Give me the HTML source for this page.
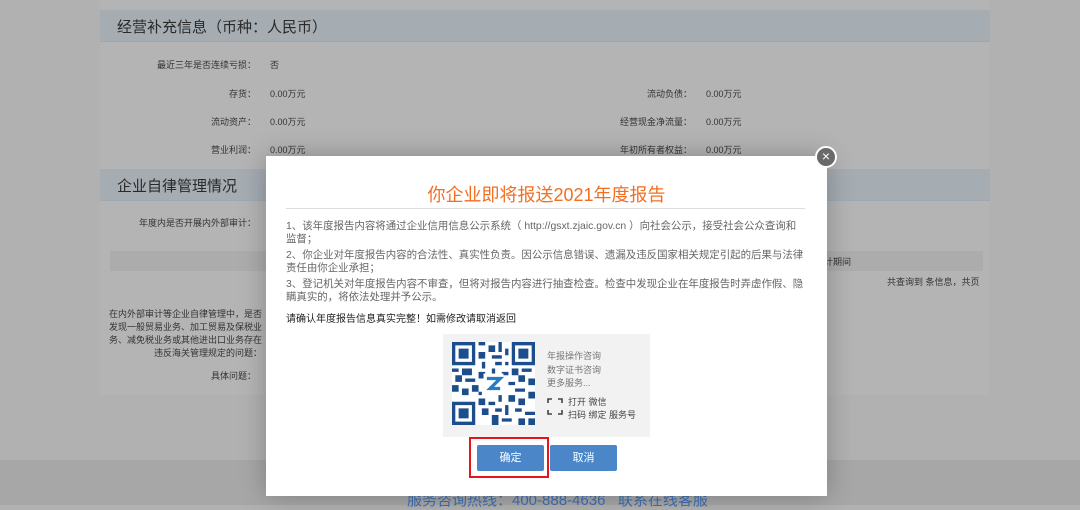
<!DOCTYPE html>
<html><head><meta charset="utf-8"><style>
*{margin:0;padding:0;box-sizing:border-box}
body{width:1080px;height:505px;overflow:hidden;background:#b1b1b1;font-family:"Liberation Sans","Noto Sans CJK SC",sans-serif;position:relative}
.a{position:absolute;white-space:nowrap}
.panel{position:absolute;left:100px;top:0;width:890px;height:395px;background:#b4b4b4}
.hd{position:absolute;left:100px;width:890px;height:32px;background:#a5acb2;border-bottom:1px solid #9fa8b0;color:#2a2a2a;font-size:15px;padding:6px 0 0 17px}
.lb{font-size:9px;color:#333;text-align:right}
.v{font-size:9px;color:#333}
.foot{position:absolute;left:0;top:460px;width:1080px;height:45px;background:#a7a7a7}
.modal{position:absolute;left:266px;top:156px;width:561px;height:340px;background:#fff;box-shadow:0 0 25px rgba(0,0,0,.25)}
.t{font-size:10.45px;color:#666;line-height:13px;margin-bottom:3px;white-space:nowrap}
.btn{position:absolute;top:445px;width:67px;height:26px;background:#4a86c8;color:#fff;font-size:11px;text-align:center;line-height:26px;border-radius:2px}
</style></head><body>
<div class="panel"></div>
<div class="hd" style="top:10px">经营补充信息（币种：人民币）</div>
<div class="a lb" style="left:140px;width:116px;top:58px">最近三年是否连续亏损：</div><div class="a v" style="left:270px;top:58px">否</div>
<div class="a lb" style="left:140px;width:116px;top:87px">存货：</div><div class="a v" style="left:270px;top:87px">0.00万元</div>
<div class="a lb" style="left:140px;width:116px;top:115px">流动资产：</div><div class="a v" style="left:270px;top:115px">0.00万元</div>
<div class="a lb" style="left:140px;width:116px;top:143px">营业利润：</div><div class="a v" style="left:270px;top:143px">0.00万元</div>
<div class="a lb" style="left:580px;width:112px;top:87px">流动负债：</div><div class="a v" style="left:706px;top:87px">0.00万元</div>
<div class="a lb" style="left:580px;width:112px;top:115px">经营现金净流量：</div><div class="a v" style="left:706px;top:115px">0.00万元</div>
<div class="a lb" style="left:580px;width:112px;top:143px">年初所有者权益：</div><div class="a v" style="left:706px;top:143px">0.00万元</div>
<div class="hd" style="top:169px">企业自律管理情况</div>
<div class="a lb" style="left:120px;width:136px;top:216px">年度内是否开展内外部审计：</div>
<div class="a" style="left:110px;top:251px;width:873px;height:20px;background:#acacac"></div>
<div class="a v" style="left:824px;top:255px">计期间</div>
<div class="a v" style="left:887px;top:275px">共查询到 条信息，共页</div>
<div class="a lb" style="left:100px;width:162px;top:308px;line-height:13px">在内外部审计等企业自律管理中，是否<br>发现一般贸易业务、加工贸易及保税业<br>务、减免税业务或其他进出口业务存在<br>违反海关管理规定的问题：</div>
<div class="a lb" style="left:150px;width:106px;top:369px">具体问题：</div>
<div class="foot"></div>
<div class="a" style="left:407px;top:489px;font-size:15px;color:#3d6fb4">服务咨询热线：400-888-4636&nbsp;&nbsp;&nbsp;联系在线客服</div>
<div class="modal">
<div class="a" style="left:0;width:561px;text-align:center;top:25px;font-size:18px;color:#f26f22">你企业即将报送2021年度报告</div>
<div class="a" style="left:20px;top:52px;width:519px;height:1px;background:#ddd"></div>
<div class="a" style="left:20px;top:64px;width:530px">
<div class="t">1、该年度报告内容将通过企业信用信息公示系统（ http://gsxt.zjaic.gov.cn ）向社会公示，接受社会公众查询和<br>监督；</div>
<div class="t">2、你企业对年度报告内容的合法性、真实性负责。因公示信息错误、遗漏及违反国家相关规定引起的后果与法律<br>责任由你企业承担；</div>
<div class="t">3、登记机关对年度报告内容不审查，但将对报告内容进行抽查检查。检查中发现企业在年度报告时弄虚作假、隐<br>瞒真实的，将依法处理并予公示。</div>
</div>
<div class="a" style="left:20px;top:154px;font-size:10px;color:#222">请确认年度报告信息真实完整！如需修改请取消返回</div>
<div class="a" style="left:177px;top:178px;width:207px;height:103px;background:#f2f2f2"></div>
<svg class="a" style="left:186px;top:186px" width="83" height="83" viewBox="0 0 25 25">
<rect width="25" height="25" fill="#fff"/>
<g fill="#1c4d8c"><path d="M0 0h7v7H0zM18 0h7v7h-7zM0 18h7v7H0z"/></g>
<g fill="#fff"><path d="M1 1h5v5H1zM19 1h5v5h-5zM1 19h5v5H1z"/></g>
<g fill="#1c4d8c"><path d="M2 2h3v3H2zM20 2h3v3h-3zM2 20h3v3H2z"/>
<path d="M8 0h2v1H8zM11 1h2v2h-2zM14 0h1v3h-1zM16 2h1v2h-1zM8 3h2v2H8zM12 4h3v1h-3zM9 6h1v2H9zM13 6h2v1h-2zM16 6h1v1h-1zM0 8h2v1H0zM3 8h3v2H3zM1 10h2v2H1zM4 11h3v1H4zM0 13h2v2H0zM3 14h2v2H3zM6 13h2v2H6zM8 9h2v2H8zM12 8h1v2h-1zM15 9h2v1h-2zM18 8h2v2h-2zM21 8h3v1h-3zM20 10h2v2h-2zM23 11h2v2h-2zM17 12h2v1h-2zM19 14h3v1h-3zM23 15h2v2h-2zM17 16h2v2h-2zM20 17h2v2h-2zM8 17h2v2H8zM11 18h2v1h-2zM9 20h2v2H9zM13 20h2v1h-2zM12 22h2v3h-2zM15 23h3v1h-3zM16 19h1v3h-1zM19 20h2v1h-2zM22 21h3v1h-3zM20 23h2v2h-2zM23 23h2v2h-2zM8 15h1v1H8zM14 16h1v2h-1z"/></g>
<rect x="9.5" y="9.5" width="6" height="6" fill="#fff"/>
<path d="M10.5 11h4l-3 3h3" stroke="#2a7ac0" stroke-width="1" fill="none"/>
</svg>
<div class="a" style="left:281px;top:194px;font-size:9px;color:#777;line-height:13.5px">年报操作咨询<br>数字证书咨询<br>更多服务...</div>
<svg class="a" style="left:281px;top:242px" width="16" height="17" viewBox="0 0 16 17" fill="none" stroke="#444" stroke-width="1.6"><path d="M1 5V1h4M11 1h4v4M1 12v4h4M11 16h4v-4"/></svg>
<div class="a" style="left:302px;top:240px;font-size:9px;color:#444;line-height:13px">打开 微信<br>扫码 绑定 服务号</div>
</div>
<div class="a" style="left:815px;top:146px;width:22px;height:22px;border-radius:50%;background:#6a6a6a;border:2px solid #fff;color:#fff;font-size:14px;line-height:17px;text-align:center">×</div>
<div class="a" style="left:469px;top:437px;width:80px;height:41px;border:2px solid #e8141b"></div>
<div class="btn" style="left:477px">确定</div>
<div class="btn" style="left:550px">取消</div>
</body></html>
